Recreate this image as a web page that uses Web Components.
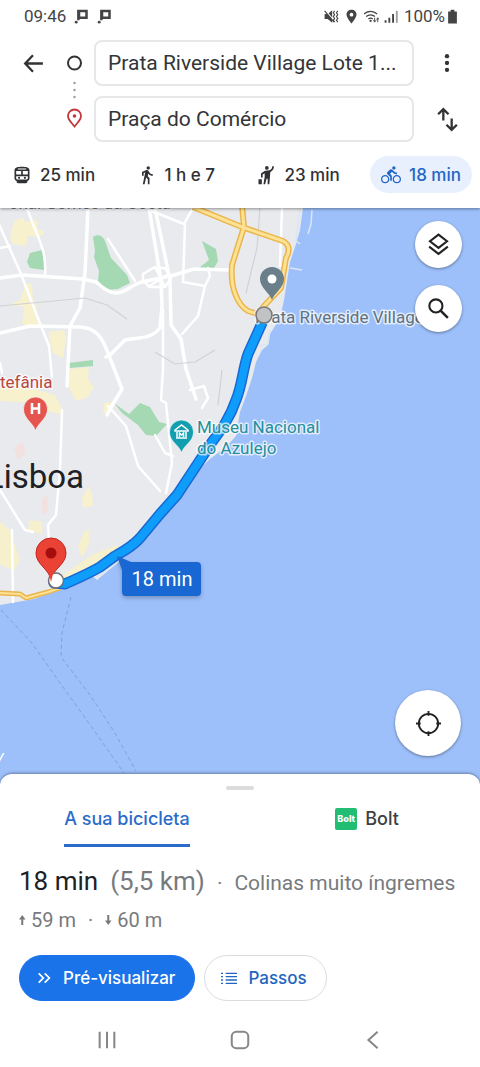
<!DOCTYPE html>
<html lang="pt">
<head>
<meta charset="utf-8">
<meta name="viewport" content="width=device-width, initial-scale=1">
<title>Prata Riverside - Praça do Comércio</title>
<style>
    body {
        margin: 0;
        background: #fff;
        color: #202124;
        font-family: Roboto, "Noto Sans", sans-serif;
    }
</style>
</head>
<body>
<directions-app></directions-app>

<script>
const icons = {
    back: `<path d="M21 12H4M11.500 4L4 12l7.500 8" fill="none" stroke="currentColor" stroke-width="2.200"/>`,
    more: `<circle cx="12" cy="3.800" r="2.600"/><circle cx="12" cy="12" r="2.600"/><circle cx="12" cy="20.200" r="2.600"/>`,
    swap: `<path d="M8 13V2M3 7l5-5 5 5M16 11v11M11 17l5 5 5-5" fill="none" stroke="currentColor" stroke-width="2.200"/>`,
    train: `<path d="M12 2C7 2 3 2.800 3 6.500v9.500c0 1.700 1.200 3 2.800 3.200L5.500 20c0 1.500 1 2 6.500 2s6.500-.5 6.500-2l-.3-.8c1.600-.2 2.800-1.500 2.800-3.200V6.500C21 2.800 17 2 12 2z"/><path d="M5 7.300h6v4.200H5zM13 7.300h6v4.200h-6zM5 13.500h14V16c0 .9-.6 1.400-1.500 1.400h-11C5.600 17.400 5 16.900 5 16zM7 4.200h10v1.100H7z" fill="#fff"/><circle cx="8.500" cy="15.400" r="1.300"/><circle cx="15.500" cy="15.400" r="1.300"/>`,
    walk: `<path d="M13.500 5.500c1.100 0 2-.9 2-2s-.9-2-2-2-2 .9-2 2 .9 2 2 2zM9.800 8.900L7 23h2.100l1.800-8 2.100 2v6h2v-7.500l-2.100-2 .6-3C14.800 12 16.800 13 19 13v-2c-1.900 0-3.500-1-4.300-2.400l-1-1.600c-.4-.6-1-1-1.700-1-.3 0-.5.100-.8.100L6 8.300V13h2V9.600l1.800-.7"/>`,
    hail: `<circle cx="13" cy="3.500" r="2.200"/><path d="M19.500 1.500h2c0 3.300-1.600 5.700-4.300 6.800L16 23h-2v-6.500h-1.400L11 23H8.900l1.500-8.500V10L8 11.500V15H6v-4.700l4.300-3.100C11 6.700 12 6.500 13.500 6.500c3.600 0 6-1.400 6-5zM3 17h4v6H3z"/>`,
    bike: `<path d="M15.500 5.500c1.100 0 2-.9 2-2s-.9-2-2-2-2 .9-2 2 .9 2 2 2zM5 12c-2.800 0-5 2.200-5 5s2.200 5 5 5 5-2.200 5-5-2.200-5-5-5zm0 8.500c-1.900 0-3.500-1.600-3.500-3.500s1.600-3.500 3.500-3.500 3.500 1.600 3.500 3.500-1.600 3.500-3.500 3.500zm5.800-10l2.400-2.400.8.800c1.300 1.300 3 2.100 5.100 2.100V9c-1.500 0-2.700-.6-3.600-1.500l-1.900-1.900c-.5-.4-1-.6-1.600-.6s-1.100.2-1.400.6L7.800 8.400c-.4.4-.6.9-.6 1.400 0 .6.200 1.100.6 1.400L11 14v5h2v-6.200l-2.200-2.300zM19 12c-2.800 0-5 2.200-5 5s2.200 5 5 5 5-2.200 5-5-2.200-5-5-5zm0 8.500c-1.900 0-3.500-1.600-3.500-3.500s1.600-3.500 3.500-3.500 3.500 1.600 3.500 3.500-1.600 3.500-3.500 3.500z"/>`,
    layers: `<path d="M12 2.500l8.200 6.400L12 15.300 3.800 8.900zM3 14l9 7 9-7" fill="none" stroke="currentColor" stroke-width="2"/>`,
    search: `<circle cx="9.500" cy="9.500" r="6.300" fill="none" stroke="currentColor" stroke-width="2"/><path d="M14 14l7 7" stroke="currentColor" stroke-width="2.400"/>`,
    locate: `<circle cx="12" cy="12" r="9.300" fill="none" stroke="currentColor" stroke-width="1.800"/><path d="M12 0V4.500M12 19.500V24M0 12h4.500M19.500 12H24" stroke="currentColor" stroke-width="1.800"/>`,
    chevrons: `<path d="M4 5l7 7-7 7M13 5l7 7-7 7" fill="none" stroke="currentColor" stroke-width="2.600"/>`,
    list: `<path d="M7 4h17v2H7zM7 9h17v2H7zM7 14h17v2H7zM7 19h17v2H7zM0 4h3v2H0zM0 9h3v2H0zM0 14h3v2H0zM0 19h3v2H0z"/>`,
    up: `<path d="M6.500 22V7" stroke="currentColor" stroke-width="4"/><path d="M0 11l6.500-9L13 11z"/>`,
    down: `<path d="M6.500 2v15" stroke="currentColor" stroke-width="4"/><path d="M0 13l6.500 9L13 13z"/>`,
    flag: `<path d="M5 1h17v15H9v2H5zM10 5v7h8V5z" fill-rule="evenodd"/><circle cx="3.500" cy="21" r="2.300"/>`,
    mute: `<path d="M1 8h5l7-6v20l-7-6H1z"/><path d="M2 2l16 19" stroke="#fff" stroke-width="2"/><path d="M1 3l15 18" stroke="currentColor" stroke-width="1.800"/><path d="M17 3l-2 3 2 3-2 3 2 3-2 3 2 3M22 3l-2 3 2 3-2 3 2 3-2 3 2 3" fill="none" stroke="currentColor" stroke-width="1.800"/>`,
    pin: `<path d="M12 1C7.300 1 4 4.300 4 8.700 4 14.200 12 23 12 23s8-8.800 8-14.300C20 4.300 16.700 1 12 1zm0 5a3 3 0 1 1 0 6 3 3 0 0 1 0-6z"/>`,
    wifi: `<g fill="none" stroke="currentColor" stroke-width="2"><path d="M0 8a15 15 0 0 1 21 0M3.500 12a10.500 10.500 0 0 1 14 0M7 16a6 6 0 0 1 7 0"/></g><circle cx="10.500" cy="19" r="1.800"/><path d="M17 14v6m-2-2l2 3 2-3M22 21v-6m-2 2l2-3 2 3" fill="none" stroke="currentColor" stroke-width="1.500"/>`,
    signal: `<path d="M1 18h3v4H1zM7 14h3v8H7zM13 8h3v14h-3z"/><path d="M19 3h3v19h-3z" opacity=".5"/>`,
    battery: `<path d="M9 1h6v3h4v19H5V4h4z"/>`,
    recents: `<path d="M4 3v18M12 3v18M20 3v18" stroke="currentColor" stroke-width="2.200"/>`,
    home: `<rect x="3" y="3" width="18" height="18" rx="5" fill="none" stroke="currentColor" stroke-width="2.200"/>`,
    return: `<path d="M17 3l-10 9 10 9" fill="none" stroke="currentColor" stroke-width="2.200"/>`
};

class UiIcon extends HTMLElement {
    constructor() {
        super();
        this.attachShadow({mode: "open"});
    }

    connectedCallback() {
        this.shadowRoot.innerHTML = `
        <style>
            :host { display: inline-flex; flex: none; width: 20px; height: 20px; }
            svg { width: 100%; height: 100%; fill: currentColor; }
        </style>
        <svg viewBox="0 0 24 24" aria-hidden="true">${icons[this.getAttribute("name")]}</svg>`;
    }
}
customElements.define("ui-icon", UiIcon);

class StatusBar extends HTMLElement {
    constructor() {
        super();
        this.attachShadow({mode: "open"}).innerHTML = `
        <style>
            :host {
                display: flex;
                align-items: center;
                justify-content: space-between;
                position: relative;
                z-index: 3;
                height: 32px;
                padding: 0 22px 0 24px;
                background: #fff;
                color: #444;
                font-size: 17px;
            }
            div { display: flex; align-items: center; gap: 5px; }
            .left { gap: 8px; }
            ui-icon { width: 15px; height: 15px; }
            .battery { display: flex; align-items: center; }
            .battery ui-icon { margin-right: -2px; }
        </style>
        <div class="left"><span>09:46</span><ui-icon name="flag"></ui-icon><ui-icon name="flag"></ui-icon></div>
        <div>
            <ui-icon name="mute"></ui-icon>
            <ui-icon name="pin"></ui-icon>
            <ui-icon name="wifi"></ui-icon>
            <ui-icon name="signal"></ui-icon>
            <span class="battery">100%<ui-icon name="battery"></ui-icon></span>
        </div>`;
    }
}
customElements.define("status-bar", StatusBar);

class AddressField extends HTMLElement {
    constructor() {
        super();
        this.attachShadow({mode: "open"});
    }

    connectedCallback() {
        this.shadowRoot.innerHTML = `
        <style>
            :host { display: block; min-width: 0; }
            input {
                box-sizing: border-box;
                width: 100%;
                height: 46px;
                padding: 0 8px 0 12px;
                border: 2px solid #e6e7e9;
                border-radius: 8px;
                background: #fff;
                color: #333538;
                font: 21px Roboto, sans-serif;
                text-overflow: ellipsis;
                outline: none;
            }
        </style>
        <input type="text" aria-label="${this.getAttribute("label")}" value="${this.getAttribute("value")}">`;
    }
}
customElements.define("address-field", AddressField);

class TravelMode extends HTMLElement {
    constructor() {
        super();
        this.attachShadow({mode: "open"});
    }

    connectedCallback() {
        this.shadowRoot.innerHTML = `
        <style>
            :host { display: block; }
            button {
                display: flex;
                align-items: center;
                gap: 8px;
                height: 37px;
                padding: 0 11px;
                border: 0;
                border-radius: 19px;
                background: none;
                color: #303134;
                font: 500 17px Inter, sans-serif;
                white-space: nowrap;
            }
            :host([selected]) button { background: #e8f0fe; color: #1f66c4; }
        </style>
        <button type="button" aria-pressed="${this.hasAttribute("selected")}">
            <ui-icon name="${this.getAttribute("icon")}"></ui-icon><slot></slot>
        </button>`;
    }
}
customElements.define("travel-mode", TravelMode);

class RouteHeader extends HTMLElement {
    constructor() {
        super();
        this.attachShadow({mode: "open"}).innerHTML = `
        <style>
            :host {
                display: block;
                position: relative;
                z-index: 2;
                background: #fff;
                box-shadow: 0 1px 3px rgba(0, 0, 0, 0.4);
            }
            .form {
                display: grid;
                grid-template-columns: 54px 40px 1fr 66px;
                grid-template-rows: 46px 46px;
                row-gap: 10px;
                padding-top: 8px;
            }
            .rail { grid-column: 2; grid-row: 1 / 3; width: 40px; height: 102px; }
            .origin, .destination { grid-column: 3; }
            button {
                display: flex;
                align-items: center;
                justify-content: center;
                padding: 0;
                border: 0;
                background: none;
                color: #333;
            }
            .back { padding-left: 12px; }
            .more, .swap { grid-column: 4; }
            .back ui-icon, .swap ui-icon { width: 25px; height: 25px; }
            nav {
                display: flex;
                justify-content: space-between;
                padding: 14px 8px 15px 1px;
            }
        </style>
        <div class="form">
            <button class="back" type="button" aria-label="Voltar"><ui-icon name="back"></ui-icon></button>
            <svg class="rail" viewBox="0 0 40 102" aria-hidden="true">
                <circle cx="20.500" cy="23" r="6.500" fill="none" stroke="#333" stroke-width="2"/>
                <g fill="#999"><circle cx="20.500" cy="43" r="1.200"/><circle cx="20.500" cy="50" r="1.200"/><circle cx="20.500" cy="57" r="1.200"/></g>
                <path d="M20.500 86.500c-3-4-6.500-6.500-6.500-10.500a6.500 6.500 0 0 1 13 0c0 4-3.500 6.500-6.500 10.500z" fill="none" stroke="#c5373a" stroke-width="1.800"/>
                <circle cx="20.500" cy="76" r="1.800" fill="#c5373a"/>
            </svg>
            <address-field class="origin" label="Origem" value="Prata Riverside Village Lote 1..."></address-field>
            <button class="more" type="button" aria-label="Mais opções"><ui-icon name="more"></ui-icon></button>
            <address-field class="destination" label="Destino" value="Praça do Comércio"></address-field>
            <button class="swap" type="button" aria-label="Trocar"><ui-icon name="swap"></ui-icon></button>
        </div>
        <nav>
            <travel-mode icon="train">25 min</travel-mode>
            <travel-mode icon="walk">1 h e 7</travel-mode>
            <travel-mode icon="hail">23 min</travel-mode>
            <travel-mode icon="bike" selected>18 min</travel-mode>
        </nav>`;
    }
}
customElements.define("route-header", RouteHeader);

class MapButton extends HTMLElement {
    constructor() {
        super();
        this.attachShadow({mode: "open"});
    }

    connectedCallback() {
        this.shadowRoot.innerHTML = `
        <style>
            :host { display: block; --size: 47px; }
            :host([large]) { --size: 66px; }
            button {
                display: flex;
                align-items: center;
                justify-content: center;
                width: var(--size);
                height: var(--size);
                padding: 0;
                border: 0;
                border-radius: 50%;
                background: #fff;
                color: #222;
                box-shadow: 0 1px 3px rgba(0, 0, 0, 0.4);
            }
            ui-icon { width: 25px; height: 25px; }
        </style>
        <button type="button" aria-label="${this.getAttribute("label")}"><ui-icon name="${this.getAttribute("icon")}"></ui-icon></button>`;
    }
}
customElements.define("map-button", MapButton);

class MapView extends HTMLElement {
    constructor() {
        super();
        this.attachShadow({mode: "open"}).innerHTML = `
        <style>
            :host {
                display: block;
                position: relative;
                min-height: 320px;
                overflow: hidden;
                background: #9dc0fb;
            }
            .map { position: absolute; width: 100%; height: 100%; }
            text { font-family: Roboto, sans-serif; font-size: 17px; }
            .halo { paint-order: stroke; stroke: rgba(255, 255, 255, 0.7); stroke-width: 3px; stroke-linejoin: round; }
            .city { font-size: 33px; }
            .tools {
                position: absolute;
                top: 13px;
                right: 18px;
                display: grid;
                gap: 17px;
            }
            .locate { position: absolute; right: 19px; bottom: 30px; }
        </style>
        <!-- the viewBox starts under the header, so y counts from the top of the window -->
        <svg class="map" viewBox="0 208 480 579" preserveAspectRatio="xMinYMin slice" role="img" aria-label="Mapa do percurso">
            <path fill="#e8eaed" d="M0 200H304L300 230 296 244 290 262 284 300 280 318 270 334 268 345 262 350 256 362 252 378 246 396 240 412 236 436 226 447 210 459 194 474 180 494 166 510 150 528 124 548 121 560 97 580 92 576 60 590 34 599 0 605z"/>
            <g fill="#fdf3c0" opacity=".7">
                <path d="M14 221l10-3 1 4 12-2 1 9 7 3-5 5-12-1-2 10-13-2-3-6zM26 283l6 1 1 15 4 8-2 8 5 10-8 3-10-4 2-17-14-2 10-5zM49 332l15-2 2 8-3 20-10-5-4-15zM70 369l19-2-1 12 6 8-6 10-12 4-8-15zM0 388l20-3 35 10 10 20-20-4-5-8-40-2zM82 498l7-12 3 8 1 12-10 2zM84 532l5-2v14l-7 14-4-12zM30 520l12 2v12l-14-4zM0 522l10 8 10 30-5 10-15-5zM104 403l12-2-5 10-8 3z"/>
                <path d="M60 577l32-22 24-10 5 5-20 14-30 18z"/>
            </g>
            <g fill="#fbd9d6" opacity=".55"><path d="M14 448l8-6 4 10-8 8zM42 500l5-6 1 18-6 2z"/></g>
            <g fill="#a4d9b3">
                <path d="M93 237c5-4 10-1 12 4l6 17 16 17 3 8-12 6-12 1-8-9 1-10-5-14 1-6z"/>
                <path d="M30 253l12-3 3 8-1 12-14-2-3-6zM202 241l14 8 2 12-4 7h-15l10-8zM68 363l25-3v6l-24 2zM114 403l15 11 11-11 10 4 9 15 8 2-11 12-10-1-8-10-16-12z"/>
            </g>
            <g fill="none" stroke="#fff" stroke-linejoin="round" stroke-linecap="round">
                <path stroke-width="3.500" d="M0 278l22-3 61 4 13 3c7 5 10 10 19 11 12 0 15-8 27-11l32-7 20-6 38 1M88 208l-3 65-5 35-10 18-3 60M0 333l30-7 50 1c16 1 22 10 28 26l14 36-12 20-3 6M149 208l12 72 1 26-2 22c-10 12-22 9-35 12l-14 14-5 3M155 208l15 72 1 45 10 14 5 30 10 30"/>
                <path stroke-width="2.500" d="M-2 222l23 52M27 208c10 30 20 40 18 68M21 274l20 52 8 20 3 31M0 248l10-2M149 210l35 14 9-16M185 224l-2 58 22 4 5-10-2-8M205 286l-7 30-16 18M108 239l27 42M163 310l0 60-2 30 5 3 6 60-6 30M62 410l-2 60-4 45-8 10 2 30M108 406l18 20 12 40 22 25M155 435l10 18 8 3M0 363l2 10M0 490l25 40 8 2M12 530l1 72M282 208l-2 58M190 390l14-4 4 12-6 10"/>
                <path stroke-width="2.500" d="M143 274l10-6 12 0 6 10-6 9-16 0-6-7zM155 267l10 20M149 286l20-12M157 262l2 6"/>
            </g>
            <g fill="none" stroke="#cfd2d6" stroke-width="1.200"><path d="M0 306l85-8 22 7 20 14M155 352l20 12 20-2 20-12M260 208l-3 40-11 45M222 370l-4 35"/></g>
            <g fill="none" stroke-linejoin="round">
                <path stroke="#eab54d" stroke-width="6" d="M193 207l49 20 41 14c7 4 7 10 3 17l-5 30-17 18-6 8-10-3c-10-6-18-22-16-46l12-38-2-22"/>
                <path stroke="#fde293" stroke-width="3" d="M193 207l49 20 41 14c7 4 7 10 3 17l-5 30-17 18-6 8-10-3c-10-6-18-22-16-46l12-38-2-22"/>
                <path stroke="#eab54d" stroke-width="5" d="M0 593l20 1 6 4 22-6 12-4"/>
                <path stroke="#fde293" stroke-width="2" d="M0 593l20 1 6 4 22-6 12-4"/>
            </g>
            <g fill="none" stroke="#d9e6f5" stroke-width="1.500"><path d="M300 208l-4 33 4 3M312 210l-1 14-3 10M290 268l12 2M270 330l-2 14-9 2M97 577l21-15"/></g>
            <g fill="none" stroke="#7f9fe0" stroke-width="1" stroke-dasharray="4 3"><path d="M1 610l30 32 32 45 30 42 31 44M71 597l-9 36-1 24 29 38 25 38 21 38"/></g>
            <g fill="none" stroke-linejoin="round" stroke-linecap="round">
                <path stroke="#1967d2" stroke-width="11" d="M262 323l-14 31c-5 14-6 32-12 46-6 18-15 30-24 42l-35 53-17 19-20 24c-8 9-16 13-25 18l-15 11c-12 7-24 12-35 17l-11-1"/>
                <path stroke="#0f9dfb" stroke-width="8" d="M262 323l-14 31c-5 14-6 32-12 46-6 18-15 30-24 42l-35 53-17 19-20 24c-8 9-16 13-25 18l-15 11c-12 7-24 12-35 17l-11-1"/>
            </g>

            <text class="halo" x="171" y="209" text-anchor="end" fill="#73777c">onal Gomes da Costa</text>
            <text class="halo" x="0" y="388" fill="#b9463f">tefânia</text>
            <text class="city" x="84" y="488" text-anchor="end" fill="#202124">Lisboa</text>
            <text class="halo" x="197" y="433" fill="#258f9d">Museu Nacional</text>
            <text class="halo" x="197" y="454" fill="#258f9d">do Azulejo</text>
            <text class="halo" x="255" y="323" fill="#5f7280">Prata Riverside Village</text>
            <text x="-4" y="762" fill="#fff" font-style="italic">y</text>

            <path fill="#6b7f8b" d="M272 300c-2-7-12-12-12-21a12 12 0 0 1 24 0c0 9-10 14-12 21z"/>
            <circle cx="272" cy="279" r="4.500" fill="#fff"/>
            <circle cx="264" cy="315" r="8" fill="#c1c2c4" stroke="#777" stroke-width="1.500"/>

            <path fill="#e5554f" stroke="#fff" stroke-opacity=".6" d="M35.500 431c-2-8-12-12-12-22a12 12 0 0 1 24 0c0 10-10 14-12 22z"/>
            <path d="M32 403v11M39 403v11M32 408.500h7" stroke="#fff" stroke-width="2.500"/>

            <path fill="#129eaf" stroke="#fff" stroke-opacity=".6" d="M181.500 453c-2-8-12-11-12-21a12 12 0 0 1 24 0c0 10-10 13-12 21z"/>
            <path d="M175 430l6.500-5 6.500 5v1h-13zM176 438h11M177 432v5M186 432v5M179.500 437v-4l2 2 2-2v4" fill="none" stroke="#fff" stroke-width="1.500"/>

            <path fill="#ea4335" stroke="#c5221f" d="M51 581c-1-12-15-16-15-28a15 15 0 0 1 30 0c0 12-14 16-15 28z"/>
            <circle cx="51" cy="553" r="5.500" fill="#a50e0e"/>
            <circle cx="56" cy="580.500" r="7.500" fill="#fff" stroke="#6c6f73" stroke-width="1.500"/>
            <path d="M51 582l-3-12h6z" fill="#ea4335"/>

            <path filter="drop-shadow(0 2px 2px rgba(0, 0, 0, 0.25))" fill="#1967d2" d="M117 556l14 6h66a4 4 0 0 1 4 4v26a4 4 0 0 1-4 4h-71a4 4 0 0 1-4-4v-22z"/>
            <text x="162" y="586" text-anchor="middle" fill="#fff" style="font-size: 20px">18 min</text>
        </svg>
        <div class="tools">
            <map-button icon="layers" label="Camadas"></map-button>
            <map-button icon="search" label="Pesquisar"></map-button>
        </div>
        <map-button class="locate" icon="locate" label="A minha localização" large></map-button>`;
    }
}
customElements.define("map-view", MapView);

class SheetTab extends HTMLElement {
    constructor() {
        super();
        this.attachShadow({mode: "open"}).innerHTML = `
        <style>
            :host { display: flex; justify-content: center; padding-left: 14px; }
            button {
                display: flex;
                align-items: center;
                gap: 8px;
                height: 57px;
                padding: 0;
                border: 0;
                border-bottom: 3px solid transparent;
                border-top: 3px solid transparent;
                background: none;
                color: #3c4043;
                font: 500 18px Inter, sans-serif;
            }
            :host([selected]) button { border-bottom-color: #2b6ccb; color: #2b6ccb; }
        </style>
        <button type="button" role="tab"><slot></slot></button>`;
    }
}
customElements.define("sheet-tab", SheetTab);

class PillButton extends HTMLElement {
    constructor() {
        super();
        this.attachShadow({mode: "open"});
    }

    connectedCallback() {
        this.shadowRoot.innerHTML = `
        <style>
            :host { display: block; }
            button {
                box-sizing: border-box;
                display: flex;
                align-items: center;
                gap: 11px;
                height: 46px;
                padding: 0 19px 0 16px;
                border: 1px solid #dadce0;
                border-radius: 23px;
                background: #fff;
                color: #2265c0;
                font: 500 17px Inter, sans-serif;
            }
            :host([primary]) button { border-color: #1a73e8; background: #1a73e8; color: #fff; }
            ui-icon { width: 16px; height: 16px; }
        </style>
        <button type="button"><ui-icon name="${this.getAttribute("icon")}"></ui-icon><slot></slot></button>`;
    }
}
customElements.define("pill-button", PillButton);

class RouteSheet extends HTMLElement {
    constructor() {
        super();
        this.attachShadow({mode: "open"}).innerHTML = `
        <style>
            :host {
                display: block;
                position: relative;
                z-index: 1;
                margin-top: -12px;
                padding: 12px 0;
                border-radius: 12px 12px 0 0;
                background: #fff;
                box-shadow: 0 -1px 3px rgba(0, 0, 0, 0.35);
            }
            .handle { width: 28px; height: 4px; margin: 0 auto; border-radius: 2px; background: #dcdcdc; }
            .tabs { display: grid; grid-template-columns: 1fr 1fr; }
            .logo {
                width: 22px;
                height: 22px;
                border-radius: 2px;
                background: #20bd72;
                color: #fff;
                font: 800 9px/22px Inter, sans-serif;
                text-align: center;
            }
            .body { padding: 18px 19px 0; color: #777a7d; font-size: 20px; }
            p { margin: 0; }
            .summary { display: flex; align-items: baseline; gap: 12px; font-size: 21px; line-height: 32px; white-space: nowrap; }
            .summary strong { color: #202124; font-size: 26px; font-weight: 400; }
            .distance { font-size: 26px; }
            .climb { display: flex; align-items: center; margin-top: 9px; line-height: 24px; }
            .climb ui-icon { width: 12px; height: 12px; }
            .climb i { margin: 0 12px; font-style: normal; }
            .actions { display: flex; gap: 9px; margin-top: 23px; }
        </style>
        <div class="handle"></div>
        <div class="tabs" role="tablist">
            <sheet-tab selected>A sua bicicleta</sheet-tab>
            <sheet-tab><span class="logo">Bolt</span>Bolt</sheet-tab>
        </div>
        <div class="body">
            <p class="summary"><strong>18 min</strong><span class="distance">(5,5 km)</span><span>·</span><span>Colinas muito íngremes</span></p>
            <p class="climb"><ui-icon name="up"></ui-icon>59 m<i>·</i><ui-icon name="down"></ui-icon>60 m</p>
            <div class="actions">
                <pill-button icon="chevrons" primary>Pré-visualizar</pill-button>
                <pill-button icon="list">Passos</pill-button>
            </div>
        </div>`;
    }
}
customElements.define("route-sheet", RouteSheet);

class SystemNav extends HTMLElement {
    constructor() {
        super();
        this.attachShadow({mode: "open"}).innerHTML = `
        <style>
            :host {
                display: grid;
                grid-template-columns: repeat(3, 1fr);
                place-items: center;
                position: relative;
                z-index: 2;
                height: 54px;
                padding: 0 40px;
                background: #fff;
            }
            button { display: flex; padding: 0 16px; border: 0; background: none; color: #85878a; }
            ui-icon { width: 22px; height: 22px; }
        </style>
        <button type="button" aria-label="Recentes"><ui-icon name="recents"></ui-icon></button>
        <button type="button" aria-label="Início"><ui-icon name="home"></ui-icon></button>
        <button type="button" aria-label="Anterior"><ui-icon name="return"></ui-icon></button>`;
    }
}
customElements.define("system-nav", SystemNav);

class DirectionsApp extends HTMLElement {
    constructor() {
        super();
        this.attachShadow({mode: "open"}).innerHTML = `
        <style>
            :host { display: flex; flex-direction: column; min-height: 100vh; }
            map-view { flex: 1; }
        </style>
        <status-bar></status-bar>
        <route-header></route-header>
        <map-view></map-view>
        <route-sheet></route-sheet>
        <system-nav></system-nav>`;
    }
}
customElements.define("directions-app", DirectionsApp);
</script>
</body>
</html>
